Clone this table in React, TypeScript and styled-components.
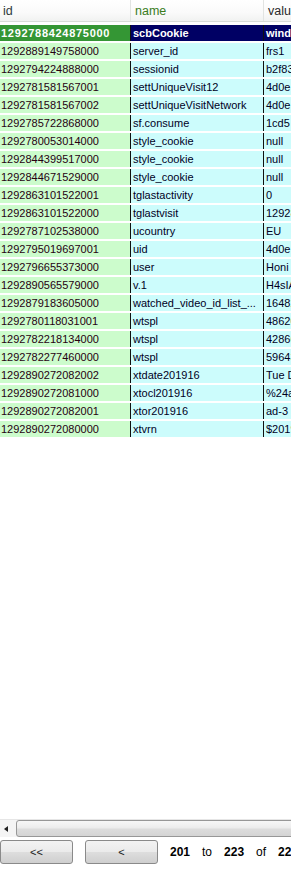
import React from "react";
import styled, { createGlobalStyle } from "styled-components";

const Global = createGlobalStyle`
  html, body { margin: 0; padding: 0; background: #ffffff; overflow: hidden; }
  body { font-family: "Liberation Sans", Arial, sans-serif; }
`;

const Page = styled.div`
  width: 291px;
  height: 877px;
  display: flex;
  flex-direction: column;
  overflow: hidden;
`;

const TableArea = styled.div`
  flex: 1;
  overflow: hidden;
  display: flex;
  flex-direction: column;
  width: 420px;
`;

const HeaderRow = styled.div`
  display: grid;
  grid-template-columns: 130px 133px 157px;
  height: 21px;
  background: linear-gradient(#ffffff, #fafafa 60%, #f1f2f1);
  border-bottom: 1px solid #d8dcd8;
  margin-bottom: 3px;
`;

const HeaderCell = styled.div<{ $color: string; $first?: boolean }>`
  display: flex;
  align-items: center;
  padding-left: ${(p) => (p.$first ? "3px" : "4px")};
  border-left: ${(p) => (p.$first ? "none" : "1px solid #e2e4e2")};
  color: ${(p) => p.$color};
  font-size: 12.5px;
`;

const Rows = styled.div`
  display: flex;
  flex-direction: column;
  gap: 2px;
`;

const Row = styled.div`
  display: grid;
  grid-template-columns: 130px 133px 157px;
  height: 16px;
`;

const Cell = styled.div<{ $kind: "id" | "text"; $selected?: boolean }>`
  display: flex;
  align-items: center;
  white-space: nowrap;
  overflow: hidden;
  font-size: 11px;
  padding-left: ${(p) => (p.$kind === "id" ? "1px" : "2px")};
  border-left: ${(p) => (p.$kind === "id" ? "none" : "1px solid #101010")};
  background: ${(p) =>
    p.$selected ? (p.$kind === "id" ? "#349634" : "#000064") : p.$kind === "id" ? "#ccfccc" : "#ccfcfc"};
  color: ${(p) => (p.$selected ? "#ffffff" : p.$kind === "id" ? "#260012" : "#00001e")};
  font-weight: ${(p) => (p.$selected ? "bold" : "normal")};
  letter-spacing: ${(p) => (p.$selected && p.$kind === "id" ? "0.7px" : "0")};
`;

const ScrollBar = styled.div`
  height: 17px;
  display: flex;
  align-items: stretch;
  background: #f3f3f3;
  border-top: 1px solid #e6e6e6;
`;

const ArrowButton = styled.div`
  width: 16px;
  display: flex;
  align-items: center;
  justify-content: center;
  background: #f4f4f4;
`;

const ArrowLeft = styled.div`
  width: 0;
  height: 0;
  border-top: 3.5px solid transparent;
  border-bottom: 3.5px solid transparent;
  border-right: 4px solid #202020;
  margin-right: 4px;
`;

const Thumb = styled.div`
  flex: 1;
  margin: 0 -4px 0 0;
  border: 1px solid #979797;
  border-radius: 3px 0 0 3px;
  background: linear-gradient(#f7f7f7 0%, #ececec 45%, #dcdcdc 55%, #d4d4d4 100%);
`;

const Pager = styled.div`
  display: flex;
  align-items: center;
  height: 24px;
  margin-top: 3px;
  margin-bottom: 13px;
  white-space: nowrap;
`;

const PagerButton = styled.button<{ $w: number }>`
  width: ${(p) => p.$w}px;
  height: 24px;
  margin: 0 12px 0 0;
  padding: 0;
  border: 1px solid #8a8a8a;
  border-radius: 3px;
  background: linear-gradient(#f3f3f3 0%, #ebebeb 48%, #dddddd 52%, #cfcfcf 100%);
  font-family: "Liberation Sans", Arial, sans-serif;
  font-size: 11px;
  color: #1a1a1a;
  flex-shrink: 0;
`;

const PageText = styled.span<{ $bold?: boolean }>`
  font-size: ${(p) => (p.$bold ? "12px" : "12px")};
  font-weight: ${(p) => (p.$bold ? "bold" : "normal")};
  color: #000;
  margin-right: 12px;
  flex-shrink: 0;
`;

const data: [string, string, string][] = [
  ["1292788424875000", "scbCookie", "window"],
  ["1292889149758000", "server_id", "frs1"],
  ["1292794224888000", "sessionid", "b2f83"],
  ["1292781581567001", "settUniqueVisit12", "4d0e"],
  ["1292781581567002", "settUniqueVisitNetwork", "4d0e"],
  ["1292785722868000", "sf.consume", "1cd5"],
  ["1292780053014000", "style_cookie", "null"],
  ["1292844399517000", "style_cookie", "null"],
  ["1292844671529000", "style_cookie", "null"],
  ["1292863101522001", "tglastactivity", "0"],
  ["1292863101522000", "tglastvisit", "12928"],
  ["1292787102538000", "ucountry", "EU"],
  ["1292795019697001", "uid", "4d0e"],
  ["1292796655373000", "user", "Honi"],
  ["1292890565579000", "v.1", "H4sIA"],
  ["1292879183605000", "watched_video_id_list_...", "16482"],
  ["1292780118031001", "wtspl", "48620"],
  ["1292782218134000", "wtspl", "42866"],
  ["1292782277460000", "wtspl", "59643"],
  ["1292890272082002", "xtdate201916", "Tue D"],
  ["1292890272081000", "xtocl201916", "%24a"],
  ["1292890272082001", "xtor201916", "ad-3"],
  ["1292890272080000", "xtvrn", "$2019"],
];

export default function App() {
  return (
    <Page>
      <Global />
      <TableArea>
        <HeaderRow>
          <HeaderCell $first $color="#2e3a3a">id</HeaderCell>
          <HeaderCell $color="#3a7c1c">name</HeaderCell>
          <HeaderCell $color="#2a2a2a">value</HeaderCell>
        </HeaderRow>
        <Rows>
          {data.map(([id, name, value], i) => (
            <Row key={id}>
              <Cell $kind="id" $selected={i === 0}>{id}</Cell>
              <Cell $kind="text" $selected={i === 0}>{name}</Cell>
              <Cell $kind="text" $selected={i === 0}>{value}</Cell>
            </Row>
          ))}
        </Rows>
      </TableArea>
      <ScrollBar>
        <ArrowButton>
          <ArrowLeft />
        </ArrowButton>
        <Thumb />
      </ScrollBar>
      <Pager>
        <PagerButton $w={73}>&lt;&lt;</PagerButton>
        <PagerButton $w={73}>&lt;</PagerButton>
        <PageText $bold>201</PageText>
        <PageText>to</PageText>
        <PageText $bold>223</PageText>
        <PageText>of</PageText>
        <PageText $bold>223</PageText>
      </Pager>
    </Page>
  );
}
